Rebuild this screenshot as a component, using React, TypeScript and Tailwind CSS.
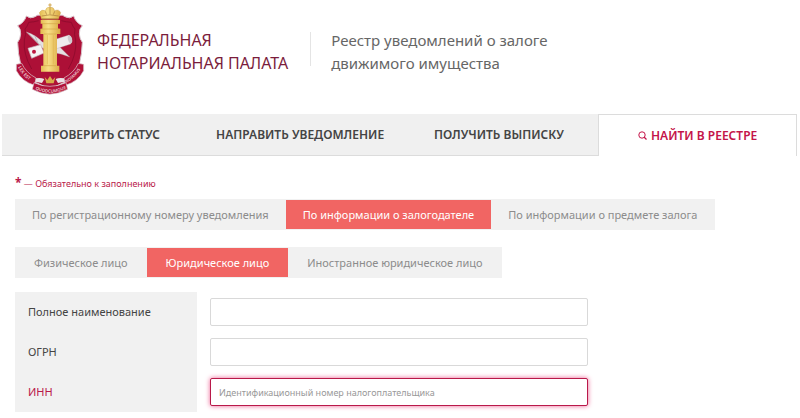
import { useState } from "react";

const sections = ["Проверить статус", "Направить уведомление", "Получить выписку", "Найти в реестре"];
const searchTabs = ["По регистрационному номеру уведомления", "По информации о залогодателе", "По информации о предмете залога"];
const personTabs = ["Физическое лицо", "Юридическое лицо", "Иностранное юридическое лицо"];

function Emblem() {
  return (
    <svg viewBox="45 6 210 282" className="w-[70px] h-[94px] shrink-0" aria-label="Герб нотариата" role="img">
      <defs>
        <linearGradient id="gold" x1="0" x2="1">
          <stop offset="0" stopColor="#e3ba50" />
          <stop offset=".4" stopColor="#f7de85" />
          <stop offset="1" stopColor="#dba944" />
        </linearGradient>
        <path id="ribbonLeft" d="M54 202 Q69 232 101 249" />
        <path id="ribbonMid" d="M103 266 Q149 290 199 266" />
        <path id="ribbonRight" d="M199 249 Q231 231 246 199" />
      </defs>
      <path
        d="M79 48 Q91 58 105 50 Q112 43 124 46 L176 46 Q188 43 195 50 Q209 58 221 48 Q227 68 247 77 Q237 86 238 102 Q239 117 247 127 Q246 162 238 192 Q221 233 190 248 L150 268 L109 248 Q79 233 62 192 Q54 162 53 127 Q61 117 62 102 Q63 86 53 77 Q73 68 79 48Z"
        fill="#ad1037"
        stroke="#d9c5cc"
        strokeWidth="3"
      />
      <path d="M86 67 Q102 66 116 62 M184 62 Q198 66 214 67 Q218 80 225 87 Q221 104 227 120 Q231 162 205 207 M86 67 Q82 80 75 87 Q79 104 73 120 Q69 162 95 207" fill="none" stroke="#920b2e" strokeWidth="3" />
      {/* scroll and quill */}
      <path d="M79 96 Q110 106 127 126 L177 139 L209 171 Q184 161 164 158 L126 143Z" fill="#e4e1e3" stroke="#b9aab1" strokeWidth="1" />
      <path d="M83 98 L124 139 M104 107 L113 127" stroke="#b0a5ab" strokeWidth="2" />
      <path d="M84 145 L122 134 L132 159 L95 175Z" fill="#f5f2f3" stroke="#c6b6bc" strokeWidth="2" />
      <path d="M157 121 L207 105 Q221 113 212 132 L157 150Z" fill="#eeebed" stroke="#b2a8ae" strokeWidth="1" />
      <ellipse cx="210" cy="118" rx="6" ry="12" transform="rotate(-15 210 118)" fill="#d1cbd0" />
      <circle cx="102" cy="155" r="6" fill="#bd1740" />
      {/* column */}
      <path d="M122 60H180V71H174V86H181V102H171V197H178V215H123V197H130V102H121V86H127V71H122Z" fill="url(#gold)" />
      <path d="M142 105V193M160 105V193" stroke="#e0b650" strokeWidth="2" />
      <path d="M126 71H176M124 87H178M132 102H169M132 197H169" stroke="#d3a647" strokeWidth="2" />
      {/* crown */}
      <path d="M125 58 L118 38 Q124 26 136 32 Q138 21 150 21 Q162 21 164 32 Q177 26 182 38 L175 58Z" fill="url(#gold)" stroke="#c0903c" strokeWidth="1" />
      <path d="M125 48 Q149 41 176 48 M126 56H175 M136 34 L140 44 M164 34 L160 44 M150 22V43" fill="none" stroke="#a87838" strokeWidth="2" />
      <path d="M150 10V22M145 15H155" stroke="#d0a34a" strokeWidth="3" />
      {/* ribbon */}
      <path d="M49 193 L65 190 Q78 218 108 234 L104 256 Q66 245 49 212Z" fill="#b1123a" stroke="#ddd0d4" strokeWidth="2" />
      <path d="M251 193 L235 190 Q222 218 192 234 L196 256 Q234 245 251 212Z" fill="#b1123a" stroke="#ddd0d4" strokeWidth="2" />
      <path d="M102 248 Q149 270 198 248 L203 268 Q149 297 97 268Z" fill="#b1123a" stroke="#ddd0d4" strokeWidth="2" />
      <path d="M108 235 Q122 232 133 237 L126 249 L106 245Z M192 235 Q178 232 167 237 L174 249 L194 245Z" fill="#ebe3e6" />
      <path d="M134 231 L142 240 L150 228 L158 240 L166 231 L161 250 H139Z" fill="#d8a94a" />
      <g className="font-['Noto_Sans',sans-serif] font-semibold" fill="#eccbd2">
        <text fontSize="14"><textPath href="#ribbonLeft">LEX EST</textPath></text>
        <text fontSize="13"><textPath href="#ribbonMid" startOffset="3">QUODCUMQUE</textPath></text>
        <text fontSize="12"><textPath href="#ribbonRight">NOTAMUS</textPath></text>
      </g>
    </svg>
  );
}

function SearchIcon() {
  return (
    <svg viewBox="0 0 9 9" className="w-[9px] h-[9px] shrink-0" fill="none" stroke="currentColor" aria-hidden="true">
      <circle cx="4" cy="4" r="3.2" />
      <path d="M6 6l2.5 2.5" strokeWidth="1.3" />
    </svg>
  );
}

type TabsProps = { items: string[]; value: number; onChange: (i: number) => void; pad: string };

function Tabs({ items, value, onChange, pad }: TabsProps) {
  return (
    <div className="flex w-fit py-px bg-[#f1f1f1] text-[11px] leading-[29px]">
      {items.map((item, i) => (
        <button
          key={item}
          type="button"
          aria-pressed={i === value}
          onClick={() => onChange(i)}
          className={`${pad} whitespace-nowrap ${i === value ? "bg-[#f16563] text-white" : "text-[#8c8c8c]"}`}
        >
          {item}
        </button>
      ))}
    </div>
  );
}

export default function App() {
  const [section, setSection] = useState(3);
  const [search, setSearch] = useState(1);
  const [person, setPerson] = useState(1);
  const input = "block w-full h-7 px-2 rounded-[2px] border border-[#d9d9d9] bg-white text-[9px] outline-none";

  return (
    <div className="bg-white font-['Noto_Sans',sans-serif] text-[#444]">
      <header className="flex items-center h-[114px] px-[15px] pb-4">
        <Emblem />
        <p className="ml-3 pt-1.5 text-base leading-[23px] uppercase text-[#7b1d3c]">
          Федеральная
          <br />
          нотариальная палата
        </p>
        <div className="ml-[22px] w-px h-[34px] bg-[#e4e4e4]" />
        <h1 className="ml-5 pt-1.5 text-[15px] leading-[23px] text-[#666]">
          Реестр уведомлений о залоге
          <br />
          движимого имущества
        </h1>
      </header>

      <nav className="grid grid-cols-4 ml-0.5 mr-[3px] h-[42px] text-xs font-semibold">
        {sections.map((name, i) => (
          <button
            key={name}
            type="button"
            onClick={() => setSection(i)}
            className={
              i === section
                ? "flex items-center justify-center gap-1 uppercase border border-b-0 border-[#dcdcdc] bg-white text-[#c4154a]"
                : "flex items-center justify-center uppercase border-b border-[#dcdcdc] bg-[#f0f0f0]"
            }
          >
            {i === 3 && <SearchIcon />}
            {name}
          </button>
        ))}
      </nav>

      <main className="px-[15px] pt-5">
        <p className="mb-2 text-[9px] leading-[14px] text-[#b9194a]">
          <span className="text-xs leading-[14px] font-bold">*</span> — Обязательно к заполнению
        </p>
        <Tabs items={searchTabs} value={search} onChange={setSearch} pad="px-[17px]" />
        <div className="mt-[17px]">
          <Tabs items={personTabs} value={person} onChange={setPerson} pad="px-[19px]" />
        </div>

        <form className="grid grid-cols-[182px_minmax(0,378px)] gap-x-[13px] mt-[14px] text-[11px]">
          <div className="flex flex-col bg-[#f1f1f1] pl-[13px] leading-10">
            <label htmlFor="fullName">Полное наименование</label>
            <label htmlFor="ogrn">ОГРН</label>
            <label htmlFor="inn" className="text-[#b9194a]">ИНН</label>
          </div>
          <div className="flex flex-col gap-3 py-1.5">
            <input id="fullName" type="text" className={input} />
            <input id="ogrn" type="text" className={input} />
            <input
              id="inn"
              type="text"
              placeholder="Идентификационный номер налогоплательщика"
              className="block w-full h-7 px-2 rounded-[2px] border border-[#b9194a] bg-white text-[9px] outline-none shadow-[0_0_5px_#ec5f91] placeholder:text-[#999]"
            />
          </div>
        </form>
      </main>
    </div>
  );
}
